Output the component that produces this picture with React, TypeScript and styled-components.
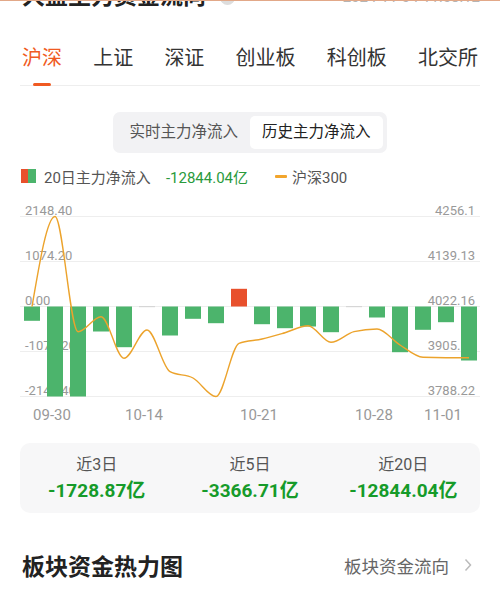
import styled, { createGlobalStyle } from "styled-components";

const GlobalStyle = createGlobalStyle`
  html, body {
    margin: 0;
    padding: 0;
    background: #ffffff;
    overflow: hidden;
  }
  body {
    font-family: Roboto, "Noto Sans CJK SC", sans-serif;
    color: #222222;
  }
`;

const Page = styled.div`
  position: relative;
  width: 500px;
  height: 605px;
  padding: 0 20px;
  box-sizing: border-box;
  overflow: hidden;
`;

// edge of the fixed header the page has scrolled under
const TopEdge = styled.div`
  position: absolute;
  top: 0;
  left: 0;
  right: 0;
  height: 1px;
  background: #e2a888;
  z-index: 2;
`;

const TitleRow = styled.div`
  display: flex;
  align-items: center;
  height: 22px;
  margin-top: -14px;
  padding: 0 0 0 2px;
`;

const Title = styled.h1`
  margin: 0;
  font-size: 23px;
  line-height: 22px;
  font-weight: 700;
  color: #222222;
`;

const HelpIcon = styled.span`
  display: inline-flex;
  align-items: center;
  justify-content: center;
  width: 15px;
  height: 15px;
  margin-left: 14px;
  border-radius: 50%;
  background: #dddddd;
  color: #ffffff;
  font-size: 11px;
`;

const Stamp = styled.span`
  margin-left: auto;
  font-size: 15px;
  color: #b5b5b5;
`;

const Tabs = styled.div`
  display: flex;
  justify-content: space-between;
  margin-top: 36px;
  padding: 0 2px;
  border-bottom: 1px solid #eeeeee;
`;

const Tab = styled.div<{ $active: boolean }>`
  position: relative;
  font-size: 20px;
  line-height: 28px;
  padding-bottom: 13px;
  color: ${(p) => (p.$active ? "#f05a22" : "#333333")};

  &::after {
    content: "";
    display: ${(p) => (p.$active ? "block" : "none")};
    position: absolute;
    left: 50%;
    bottom: -1px;
    width: 18px;
    height: 3px;
    border-radius: 2px;
    transform: translateX(-50%);
    background: #f05a22;
  }
`;

const Segment = styled.div`
  display: flex;
  width: fit-content;
  margin: 26px auto 0;
  padding: 4px;
  border-radius: 7px;
  background: #f2f2f4;
`;

const SegmentItem = styled.div<{ $active: boolean }>`
  padding: 0 12px;
  height: 33px;
  line-height: 33px;
  font-size: 15.5px;
  border-radius: 5px;
  background: ${(p) => (p.$active ? "#ffffff" : "transparent")};
  color: ${(p) => (p.$active ? "#222222" : "#555555")};
`;

const Legend = styled.div`
  display: flex;
  align-items: center;
  height: 20px;
  margin-top: 13px;
  padding-left: 1px;
  font-size: 15px;
  color: #555555;
`;

const Swatch = styled.span`
  display: inline-block;
  width: 15px;
  height: 14px;
  margin-right: 8px;
  background: linear-gradient(90deg, #e8502c 50%, #4cb46c 50%);
`;

const LegendValue = styled.span`
  margin-left: 15px;
  color: #2a9a3c;
`;

const LegendDash = styled.span`
  display: inline-block;
  width: 12px;
  height: 3px;
  margin: 0 5px 0 27px;
  border-radius: 1px;
  background: #f2a52c;
`;

const ChartSvg = styled.svg`
  display: block;
  margin-top: 10px;
  font-family: Roboto, "Noto Sans CJK SC", sans-serif;
`;

const Stats = styled.div`
  display: grid;
  grid-template-columns: repeat(3, 1fr);
  margin-top: 15px;
  padding: 11px 0 9px;
  border-radius: 10px;
  background: #f7f7f8;
`;

const Stat = styled.div`
  display: flex;
  flex-direction: column;
  align-items: center;
  gap: 2px;
`;

const StatLabel = styled.span`
  font-size: 16px;
  line-height: 22px;
  color: #555555;
`;

const StatValue = styled.span`
  font-size: 19px;
  line-height: 26px;
  font-weight: 700;
  color: #169b2a;
`;

const SectionRow = styled.div`
  display: flex;
  align-items: center;
  justify-content: space-between;
  height: 30px;
  margin-top: 37px;
  padding: 0 8px 0 2px;
`;

const SectionTitle = styled.h2`
  margin: 0;
  font-size: 23px;
  font-weight: 700;
  color: #222222;
`;

const MoreLink = styled.span`
  display: flex;
  align-items: center;
  gap: 15px;
  font-size: 17.5px;
  color: #666666;
`;

// chart data: 主力净流入 (亿) and 沪深300
const flows = [
  -341.35, -2148.4, -2148.4, -596.78, -971.55, 0, -692.26, -293.61, -398.65, 422.52,
  -422.52, -518.0, -477.42, -613.49, 0, -262.58, -1090.9, -556.19, -374.77, -1289.04,
];
const index300 = [
  4021.6, 4256.1, 3956.7, 3995.6, 3887.5, 3961.1, 3852.7, 3836.3, 3788.2, 3926.5,
  3937.7, 3954.0, 3972.2, 3929.1, 3956.7, 3963.7, 3922.1, 3890.1, 3889.1, 3889.1,
];
const leftTicks = ["2148.40", "1074.20", "0.00", "-1074.20", "-2148.40"];
const rightTicks = ["4256.1", "4139.13", "4022.16", "3905.19", "3788.22"];
const dates: [number, string][] = [
  [1, "09-30"],
  [5, "10-14"],
  [10, "10-21"],
  [15, "10-28"],
  [18, "11-01"],
];

const TOP = 216.5;
const STEP = 45;
const ZERO = TOP + STEP * 2;
const cx = (i: number) => 32 + 23 * i;
const flowY = (v: number) => ZERO - (v * STEP) / 1074.2;
const idxY = (v: number) => ZERO - ((v - 4022.16) * STEP) / 116.97;

// monotone cubic through the points, as d3's curveMonotoneX
function monotonePath(xs: number[], ys: number[]) {
  const n = xs.length;
  const sl: number[] = [];
  for (let i = 0; i < n - 1; i++) sl.push((ys[i + 1] - ys[i]) / (xs[i + 1] - xs[i]));
  const t: number[] = new Array(n).fill(0);
  for (let i = 1; i < n - 1; i++) {
    const s0 = sl[i - 1];
    const s1 = sl[i];
    const h0 = xs[i] - xs[i - 1];
    const h1 = xs[i + 1] - xs[i];
    const p = (s0 * h1 + s1 * h0) / (h0 + h1);
    t[i] = (Math.sign(s0) + Math.sign(s1)) * Math.min(Math.abs(s0), Math.abs(s1), 0.5 * Math.abs(p)) || 0;
  }
  t[0] = (3 * sl[0] - t[1]) / 2;
  t[n - 1] = (3 * sl[n - 2] - t[n - 2]) / 2;
  let d = `M${xs[0]},${ys[0]}`;
  for (let i = 0; i < n - 1; i++) {
    const dx = (xs[i + 1] - xs[i]) / 3;
    d += ` C${xs[i] + dx},${ys[i] + dx * t[i]} ${xs[i + 1] - dx},${ys[i + 1] - dx * t[i + 1]} ${xs[i + 1]},${ys[i + 1]}`;
  }
  return d;
}

function FlowChart() {
  const xs = index300.map((_, i) => cx(i));
  const ys = index300.map(idxY);

  return (
    <ChartSvg width={460} height={232} viewBox="20 196 460 232">
      {leftTicks.map((t, k) => (
        <g key={t}>
          <line x1={20} x2={480} y1={TOP + STEP * k} y2={TOP + STEP * k} stroke="#eeeeee" strokeWidth={1} />
          <text x={25} y={TOP + STEP * k - 1.5} fontSize={13} fill="#999999">
            {t}
          </text>
          <text x={475} y={TOP + STEP * k - 1.5} fontSize={13} fill="#999999" textAnchor="end">
            {rightTicks[k]}
          </text>
        </g>
      ))}

      {flows.map((v, i) =>
        v === 0 ? (
          <rect key={i} x={cx(i) - 8} y={ZERO - 0.5} width={16} height={1.2} fill="#d6d6d6" />
        ) : (
          <rect
            key={i}
            x={cx(i) - 8}
            y={Math.min(ZERO, flowY(v))}
            width={16}
            height={Math.abs(flowY(v) - ZERO)}
            fill={v > 0 ? "#e8502c" : "#4cb46c"}
          />
        )
      )}

      <path d={monotonePath(xs, ys)} fill="none" stroke="#eca32c" strokeWidth={1.4} />

      {dates.map(([i, d]) => (
        <text key={d} x={cx(i) - 3} y={420} fontSize={15} fill="#999999" textAnchor="middle">
          {d}
        </text>
      ))}
    </ChartSvg>
  );
}

const tabs = ["沪深", "上证", "深证", "创业板", "科创板", "北交所"];
const stats = [
  { label: "近3日", value: "-1728.87亿" },
  { label: "近5日", value: "-3366.71亿" },
  { label: "近20日", value: "-12844.04亿" },
];

export default function App() {
  return (
    <>
      <GlobalStyle />
      <Page>
        <TopEdge />
        <TitleRow>
          <Title>大盘主力资金流向</Title>
          <HelpIcon>?</HelpIcon>
          <Stamp>2024-11-04 11:08:12</Stamp>
        </TitleRow>

        <Tabs>
          {tabs.map((t, i) => (
            <Tab key={t} $active={i === 0}>
              {t}
            </Tab>
          ))}
        </Tabs>

        <Segment>
          <SegmentItem $active={false}>实时主力净流入</SegmentItem>
          <SegmentItem $active={true}>历史主力净流入</SegmentItem>
        </Segment>

        <Legend>
          <Swatch />
          20日主力净流入
          <LegendValue>-12844.04亿</LegendValue>
          <LegendDash />
          沪深300
        </Legend>

        <FlowChart />

        <Stats>
          {stats.map((s) => (
            <Stat key={s.label}>
              <StatLabel>{s.label}</StatLabel>
              <StatValue>{s.value}</StatValue>
            </Stat>
          ))}
        </Stats>

        <SectionRow>
          <SectionTitle>板块资金热力图</SectionTitle>
          <MoreLink>
            板块资金流向
            <svg width="8" height="14" viewBox="0 0 8 14">
              <polyline points="1.5,1.5 6.5,7 1.5,12.5" fill="none" stroke="#bbbbbb" strokeWidth="1.5" />
            </svg>
          </MoreLink>
        </SectionRow>
      </Page>
    </>
  );
}
